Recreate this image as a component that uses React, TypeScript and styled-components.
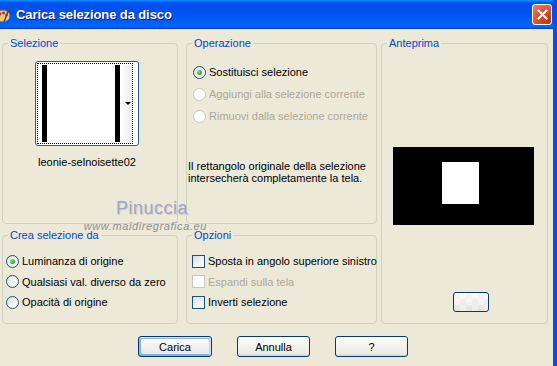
import React from "react";
import styled, { createGlobalStyle, css } from "styled-components";

const Global = createGlobalStyle`
  html, body { margin: 0; padding: 0; background: #ece9d8; }
  body { font-family: "Liberation Sans", Arial, sans-serif; font-size: 11px; color: #000; }
  * { box-sizing: border-box; }
`;

const Window = styled.div`
  position: relative;
  width: 557px;
  height: 366px;
  overflow: hidden;
  background: #ece9d8;
  border-right: 4px solid #0a4fd6;
  display: flex;
  flex-direction: column;
`;

const TitleBar = styled.div`
  height: 29px;
  flex: none;
  display: flex;
  align-items: center;
  margin-right: -4px;
  background: linear-gradient(180deg, #0997ff 0%, #0053ee 9%, #0050ee 40%, #0062f6 85%, #0066ff 92%, #005bff 95%, #003dd7 97%, #003dd7 100%);
`;

const TitleIcon = styled.svg`
  margin-left: -5px;
  margin-right: 5px;
  flex: none;
`;

const TitleText = styled.div`
  flex: 1;
  color: #fff;
  font-family: "Liberation Sans", Arial, sans-serif;
  font-weight: bold;
  font-size: 13px;
  letter-spacing: -0.1px;
  text-shadow: 1px 1px #0f1089;
`;

const CloseButton = styled.div`
  width: 20px;
  height: 21px;
  margin-right: 5px;
  border: 1px solid #fff;
  border-radius: 3px;
  background: radial-gradient(circle at 85% 85%, #c3380f 0%, #d9502a 50%, #e88a6c 100%);
  display: flex;
  align-items: center;
  justify-content: center;
`;

const Body = styled.div`
  padding: 8px 0 0 2px;
  display: grid;
  grid-template-columns: 180px 191px 167px;
  grid-template-rows: 187px 95px;
  column-gap: 4px;
  row-gap: 5px;
`;

const Group = styled.fieldset<{ $col: string; $row: string; $w?: number }>`
  grid-column: ${(p) => p.$col};
  grid-row: ${(p) => p.$row};
  ${(p) => p.$w && css`width: ${p.$w}px;`}
  margin: 0;
  padding: 0;
  min-width: 0;
  border: 1px solid #d0d0bf;
  border-radius: 4px;
  display: flex;
  flex-direction: column;
`;

const Legend = styled.legend`
  color: #0046d5;
  padding: 0 2px;
  margin-left: 5px;
  font-size: 11px;
  line-height: 13px;
`;

const ThumbColumn = styled.div`
  display: flex;
  flex-direction: column;
  align-items: center;
  padding-right: 6px;
  margin-top: 11px;
`;

const ThumbFrame = styled.div`
  width: 104px;
  height: 85px;
  border: 1px solid #2f5c8c;
  border-radius: 3px;
  background: #fff;
  padding: 1px 5px 1px 1px;
  position: relative;
`;

const FocusRect = styled.div`
  height: 100%;
  border: 1px dotted #000;
  padding: 1px 0 1px 4px;
  display: flex;
`;

const Bar = styled.div`
  width: 5px;
  background: #000;
  flex: none;
`;

const WhiteGap = styled.div`
  width: 68px;
  background: #fff;
  flex: none;
`;

const Fade = styled.div`
  flex: 1;
  background: linear-gradient(90deg, #fff, #ececec);
`;

const DropArrow = styled.div`
  position: absolute;
  right: 7px;
  top: 40px;
  width: 0;
  height: 0;
  border-left: 3px solid transparent;
  border-right: 3px solid transparent;
  border-top: 3px solid #000;
`;

const ThumbLabel = styled.div`
  margin-top: 10px;
  line-height: 13px;
`;

const OptionList = styled.div<{ $top: number; $left: number; $row: number }>`
  display: flex;
  flex-direction: column;
  margin-top: ${(p) => p.$top}px;
  padding-left: ${(p) => p.$left}px;
  & > * { height: ${(p) => p.$row}px; }
`;

const OptionRow = styled.label<{ $disabled?: boolean }>`
  display: flex;
  align-items: center;
  gap: 3px;
  white-space: nowrap;
  color: ${(p) => (p.$disabled ? "#aca899" : "#000")};
`;

const RadioDot = styled.span<{ $checked?: boolean; $disabled?: boolean }>`
  width: 13px;
  height: 13px;
  flex: none;
  border-radius: 50%;
  border: 1px solid ${(p) => (p.$disabled ? "#cac8bb" : "#1c5180")};
  background: ${(p) =>
    p.$disabled ? "#fff" : "linear-gradient(135deg, #dcdcd7 0%, #fff 80%)"};
  display: flex;
  align-items: center;
  justify-content: center;
  &::after {
    content: "";
    display: ${(p) => (p.$checked ? "block" : "none")};
    width: 5px;
    height: 5px;
    border-radius: 50%;
    background: radial-gradient(circle at 35% 35%, #8fe68f, #21a121 70%);
  }
`;

const CheckBox = styled.span<{ $disabled?: boolean }>`
  width: 13px;
  height: 13px;
  flex: none;
  border: 1px solid ${(p) => (p.$disabled ? "#cac8bb" : "#1c5180")};
  background: ${(p) =>
    p.$disabled ? "#fff" : "linear-gradient(135deg, #dcdcd7 0%, #fff 85%)"};
`;

const Description = styled.div`
  margin-top: 33px;
  padding-left: 1px;
  line-height: 12px;
`;

const PreviewBox = styled.div`
  margin: 97px 0 0 11px;
  width: 141px;
  height: 78px;
  background: #000;
  padding: 15px 0 0 49px;
`;

const PreviewSquare = styled.div`
  width: 37px;
  height: 42px;
  background: #fff;
`;

const XPButton = styled.button<{ $default?: boolean; $w: number; $h: number }>`
  width: ${(p) => p.$w}px;
  height: ${(p) => p.$h}px;
  padding: 0;
  font-family: "Liberation Sans", Arial, sans-serif;
  font-size: 11px;
  color: #000;
  border: 1px solid #003c74;
  border-radius: 3px;
  background: linear-gradient(180deg, #fff 0%, #f3f3ef 40%, #ecebe6 86%, #d6d0c5 100%);
  ${(p) =>
    p.$default &&
    css`
      box-shadow: inset -1px 1px #cee7ff, inset 1px 2px #98b8ea, inset -2px 2px #bcd4f6,
        inset 1px -1px #89ade4, inset 2px -2px #89ade4;
    `}
`;

const SwatchButton = styled(XPButton)`
  margin: 67px 0 0 71px;
  flex: none;
  background:
    linear-gradient(180deg, rgba(255,255,255,0.5), rgba(214,208,197,0.35)),
    repeating-conic-gradient(#fafaf8 0% 25%, #eeede8 0% 50%) 0 0 / 12px 12px;
`;

const ButtonRow = styled.div`
  display: flex;
  gap: 25px;
  padding-left: 138px;
  margin-top: 12px;
`;

const Watermark = styled.div`
  position: absolute;
  left: 85px;
  top: 199px;
  width: 122px;
  display: flex;
  flex-direction: column;
  align-items: flex-end;
  pointer-events: none;
`;

const WatermarkName = styled.div`
  font-family: "Liberation Sans", Arial, sans-serif;
  font-size: 18px;
  letter-spacing: 0.5px;
  color: #a5a5bb;
  line-height: 18px;
  margin-right: 19px;
  text-shadow: 1px 1px #cfcfdb;
`;

const WatermarkUrl = styled.div`
  font-family: "Liberation Sans", Arial, sans-serif;
  font-style: italic;
  font-size: 11px;
  letter-spacing: 0.6px;
  color: #8f8f8f;
  line-height: 12px;
  margin-top: 3px;
`;

const Radio = ({ label, checked, disabled }: { label: string; checked?: boolean; disabled?: boolean }) => (
  <OptionRow $disabled={disabled}>
    <RadioDot $checked={checked} $disabled={disabled} />
    {label}
  </OptionRow>
);

const Check = ({ label, disabled }: { label: string; disabled?: boolean }) => (
  <OptionRow $disabled={disabled}>
    <CheckBox $disabled={disabled} />
    {label}
  </OptionRow>
);

export default function App() {
  return (
    <>
      <Global />
      <Window>
        <TitleBar>
          <TitleIcon width="16" height="16" viewBox="0 0 16 16">
            <ellipse cx="8" cy="9" rx="7" ry="6" fill="#e8c590" stroke="#8a5a2a" strokeWidth="0.8" />
            <circle cx="5" cy="7" r="1.4" fill="#e02020" />
            <circle cx="8.5" cy="6" r="1.4" fill="#2050e0" />
            <circle cx="11.5" cy="8" r="1.4" fill="#20b020" />
            <circle cx="5.5" cy="11" r="1.4" fill="#f0d020" />
            <path d="M9 15 L14 2" stroke="#704010" strokeWidth="1.5" />
          </TitleIcon>
          <TitleText>Carica selezione da disco</TitleText>
          <CloseButton>
            <svg width="11" height="11" viewBox="0 0 11 11">
              <path d="M1.5 1.5 L9.5 9.5 M9.5 1.5 L1.5 9.5" stroke="#fff" strokeWidth="2" strokeLinecap="square" />
            </svg>
          </CloseButton>
        </TitleBar>

        <Body>
          <Group $col="1" $row="1" $w={176}>
            <Legend>Selezione</Legend>
            <ThumbColumn>
              <ThumbFrame>
                <FocusRect>
                  <Bar />
                  <WhiteGap />
                  <Bar />
                  <Fade />
                </FocusRect>
                <DropArrow />
              </ThumbFrame>
              <ThumbLabel>leonie-selnoisette02</ThumbLabel>
            </ThumbColumn>
          </Group>

          <Group $col="2" $row="1">
            <Legend>Operazione</Legend>
            <OptionList $top={11} $left={6} $row={22}>
              <Radio label="Sostituisci selezione" checked />
              <Radio label="Aggiungi alla selezione corrente" disabled />
              <Radio label="Rimuovi dalla selezione corrente" disabled />
            </OptionList>
            <Description>
              Il rettangolo originale della selezione
              <br />
              intersecherà completamente la tela.
            </Description>
          </Group>

          <Group $col="3" $row="1 / 3">
            <Legend>Anteprima</Legend>
            <PreviewBox>
              <PreviewSquare />
            </PreviewBox>
            <SwatchButton $w={36} $h={20} />
          </Group>

          <Group $col="1" $row="2" $w={176}>
            <Legend>Crea selezione da</Legend>
            <OptionList $top={9} $left={3} $row={20.5}>
              <Radio label="Luminanza di origine" checked />
              <Radio label="Qualsiasi val. diverso da zero" />
              <Radio label="Opacità di origine" />
            </OptionList>
          </Group>

          <Group $col="2" $row="2">
            <Legend>Opzioni</Legend>
            <OptionList $top={9} $left={5} $row={20.5}>
              <Check label="Sposta in angolo superiore sinistro" />
              <Check label="Espandi sulla tela" disabled />
              <Check label="Inverti selezione" />
            </OptionList>
          </Group>
        </Body>

        <ButtonRow>
          <XPButton $default $w={74} $h={21}>Carica</XPButton>
          <XPButton $w={73} $h={21}>Annulla</XPButton>
          <XPButton $w={73} $h={21}>?</XPButton>
        </ButtonRow>

        <Watermark>
          <WatermarkName>Pinuccia</WatermarkName>
          <WatermarkUrl>www.maidiregrafica.eu</WatermarkUrl>
        </Watermark>
      </Window>
    </>
  );
}
